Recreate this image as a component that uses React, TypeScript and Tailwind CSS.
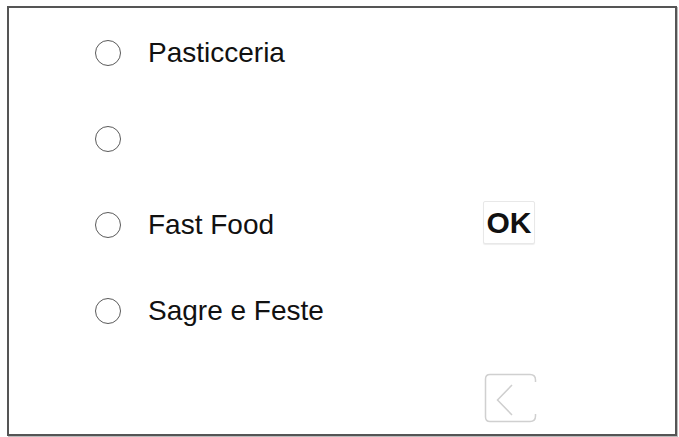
const options = ["Pasticceria", "", "Fast Food", "Sagre e Feste"];

const Radio = () => (
  <span className="block w-[26px] h-[26px] shrink-0 rounded-full border-[1.5px] border-[#5a5a5a] bg-white" />
);

const BackIcon = () => (
  <svg width="54" height="50" viewBox="0 0 54 50" fill="none">
    <path
      d="M46 1.5 H6 Q1.5 1.5 1.5 6 V44 Q1.5 48.5 6 48.5 H46"
      stroke="#d0d0d0"
      strokeWidth="1.5"
    />
    <path d="M46 1.5 Q51.5 1.5 51.5 7 V9" stroke="#d0d0d0" strokeWidth="1.5" />
    <path d="M51.5 41 V43 Q51.5 48.5 46 48.5" stroke="#d0d0d0" strokeWidth="1.5" />
    <path d="M28 12 L13.5 27 L28 42" stroke="#cfcfcf" strokeWidth="1.5" />
  </svg>
);

export default function App() {
  return (
    <div className="w-[679px] h-[437px] bg-white pt-[6px] pl-[7px] font-['Liberation_Sans',Arial,sans-serif]">
      <div className="w-[670px] h-[430px] border-2 border-[#555] shadow-[1px_1px_0_#bbb] flex">
        {/* options */}
        <div className="w-[474px] pl-[86px] pt-[2px] flex flex-col">
          {options.map((label, i) => (
            <div key={i} className="h-[86px] flex items-center gap-[27px]">
              <Radio />
              <span className="text-[28px] leading-none text-[#111]">{label}</span>
            </div>
          ))}
        </div>

        {/* actions */}
        <div className="flex flex-col items-start">
          <button className="mt-[193px] w-[52px] h-[43px] flex items-center justify-center border border-[#e8e8e8] rounded-[2px] bg-white shadow-[0_1px_1px_#eee] text-[30px] font-bold leading-none text-[#111]">
            OK
          </button>
          <button className="mt-[129px] ml-[1px]" aria-label="Back">
            <BackIcon />
          </button>
        </div>
      </div>
    </div>
  );
}
